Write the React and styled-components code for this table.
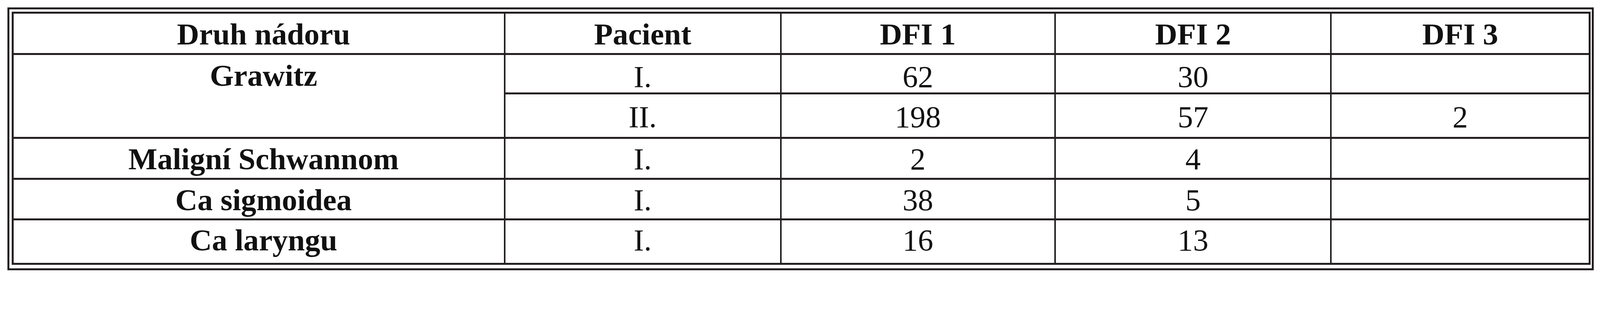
import React from 'react';
import styled, { createGlobalStyle } from 'styled-components';

const ink = '#231f20';

// the layout is drawn in pixels of the 4637px wide picture, scaled to the viewport
const u = n => `calc(${n} * 100vw / 4637)`;

const GlobalStyle = createGlobalStyle`
  html, body {
    overflow: hidden;
  }
  body {
    margin: 0;
    background: #fff;
    font-family: 'Liberation Serif', 'Times New Roman', serif;
    color: #111;
  }
`;

const Frame = styled.div`
  box-sizing: border-box;
  width: ${u(4597)};
  margin: ${u(22)} 0 0 ${u(22)};
  border: ${u(6)} solid ${ink};
  padding: ${u(6)} ${u(4)} ${u(10)} ${u(6)};
`;

const Table = styled.table`
  table-layout: fixed;
  width: ${u(4575)};
  border-collapse: separate;
  border-spacing: 0;
  border: ${u(6)} solid ${ink};
  font-size: ${u(89)};
  line-height: 1;

  tbody td {
    border-top: ${u(6)} solid ${ink};
  }
`;

const Col = styled.col`
  width: ${p => u(p.$w)};
`;

const Row = styled.tr`
  height: ${p => u(p.$h)};
`;

// shift moves the text off the vertical centre of the row
const pad = shift => `
  padding-top: ${u(Math.max(0, shift * 2))};
  padding-bottom: ${u(Math.max(0, -shift * 2))};
`;

const HeadCell = styled.th`
  font-weight: 700;
  text-align: center;
  vertical-align: middle;
  white-space: nowrap;
  padding-left: ${p => u(p.$first ? 28 : 0)};
  padding-right: 0;
  border-left: ${p => (p.$first ? 'none' : `${u(5)} solid ${ink}`)};
  ${pad(3)}
`;

const NameCell = styled.td`
  font-weight: 700;
  text-align: center;
  white-space: nowrap;
  vertical-align: ${p => (p.$top ? 'top' : 'middle')};
  padding-left: ${u(28)};
  padding-right: 0;
  ${p => (p.$top ? `padding-top: ${u(15)}; padding-bottom: 0;` : pad(p.$shift))}
`;

const Cell = styled.td`
  text-align: center;
  vertical-align: middle;
  white-space: nowrap;
  padding-left: 0;
  padding-right: 0;
  border-left: ${u(5)} solid ${ink};
  ${p => pad(p.$shift)}
`;

const widths = [1421, 800, 795, 800, 749];
const heads = ['Druh nádoru', 'Pacient', 'DFI 1', 'DFI 2', 'DFI 3'];

const rows = [
  { h: 129, shift: 4.5, pacient: 'II.', dfi: ['198', '57', '2'] },
  { name: 'Maligní Schwannom', h: 119, shift: 2.5, pacient: 'I.', dfi: ['2', '4', ''] },
  { name: 'Ca sigmoidea', h: 118, shift: 3, pacient: 'I.', dfi: ['38', '5', ''] },
  { name: 'Ca laryngu', h: 129, shift: -3, pacient: 'I.', dfi: ['16', '13', ''] }
];

const App = () => (
  <>
    <GlobalStyle />
    <Frame>
      <Table>
        <colgroup>
          {widths.map((w, i) => (
            <Col key={i} $w={w} />
          ))}
        </colgroup>
        <thead>
          <Row $h={115}>
            {heads.map((h, i) => (
              <HeadCell key={h} $first={i === 0}>
                {h}
              </HeadCell>
            ))}
          </Row>
        </thead>
        <tbody>
          <Row $h={107}>
            <NameCell rowSpan={2} $top>
              Grawitz
            </NameCell>
            <Cell $shift={9.5}>I.</Cell>
            <Cell $shift={9.5}>62</Cell>
            <Cell $shift={9.5}>30</Cell>
            <Cell $shift={9.5} />
          </Row>
          {rows.map((r, i) => (
            <Row key={i} $h={r.h}>
              {r.name && <NameCell $shift={r.shift}>{r.name}</NameCell>}
              <Cell $shift={r.shift}>{r.pacient}</Cell>
              {r.dfi.map((d, j) => (
                <Cell key={j} $shift={r.shift}>
                  {d}
                </Cell>
              ))}
            </Row>
          ))}
        </tbody>
      </Table>
    </Frame>
  </>
);

export default App;
